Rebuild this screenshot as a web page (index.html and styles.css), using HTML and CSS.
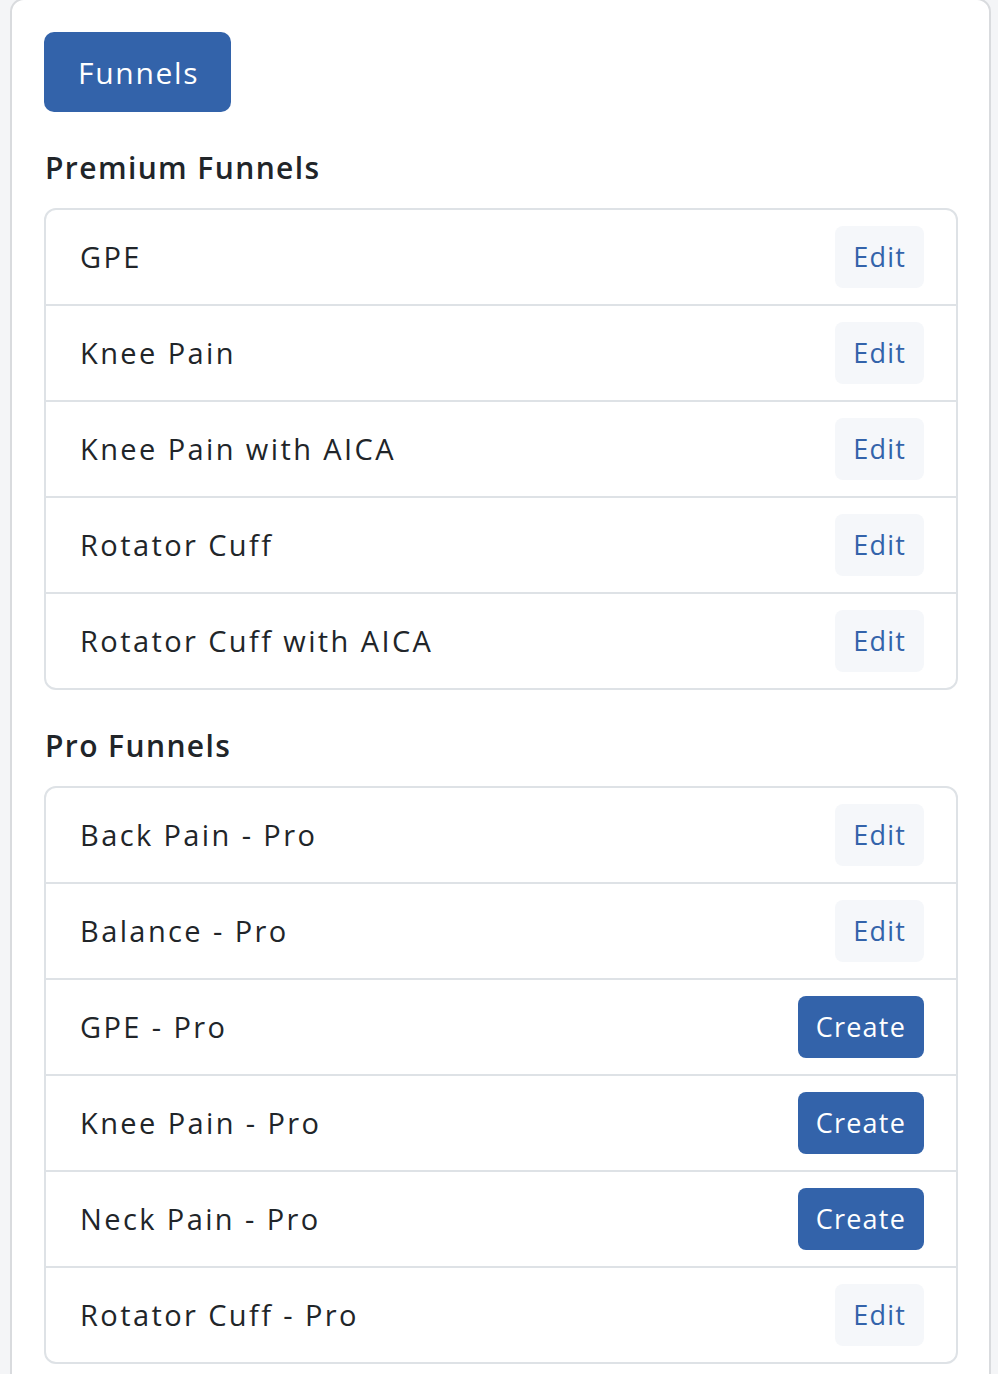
FILE: index.html
```html
<!DOCTYPE html>
<html lang="en">
<head>
<meta charset="utf-8">
<title>Funnels</title>
<link rel="stylesheet" href="styles.css">
</head>
<body>
<div class="card">
  <div class="top"><button class="btn btn-primary btn-lg">Funnels</button></div>
  <h2 class="section-title">Premium Funnels</h2>
  <ul class="list">
    <li class="row"><span class="name">GPE</span><button class="btn btn-light">Edit</button></li>
    <li class="row"><span class="name">Knee Pain</span><button class="btn btn-light">Edit</button></li>
    <li class="row"><span class="name">Knee Pain with AICA</span><button class="btn btn-light">Edit</button></li>
    <li class="row"><span class="name">Rotator Cuff</span><button class="btn btn-light">Edit</button></li>
    <li class="row"><span class="name">Rotator Cuff with AICA</span><button class="btn btn-light">Edit</button></li>
  </ul>
  <h2 class="section-title second">Pro Funnels</h2>
  <ul class="list">
    <li class="row"><span class="name">Back Pain - Pro</span><button class="btn btn-light">Edit</button></li>
    <li class="row"><span class="name">Balance - Pro</span><button class="btn btn-light">Edit</button></li>
    <li class="row"><span class="name">GPE - Pro</span><button class="btn btn-primary">Create</button></li>
    <li class="row"><span class="name">Knee Pain - Pro</span><button class="btn btn-primary">Create</button></li>
    <li class="row"><span class="name">Neck Pain - Pro</span><button class="btn btn-primary">Create</button></li>
    <li class="row"><span class="name">Rotator Cuff - Pro</span><button class="btn btn-light">Edit</button></li>
  </ul>
</div>
</body>
</html>
```
FILE: styles.css
```css
* { box-sizing: border-box; }
html, body { margin: 0; padding: 0; }
body {
  background: #f4f5f7;
  font-family: "Open Sans", "Noto Sans", sans-serif;
  color: #212529;
  height: 1374px;
  overflow: hidden;
}
.card {
  margin: -2px 7px 0 10px;
  background: #fff;
  border: 2px solid #d9dbde;
  border-radius: 14px;
  padding: 32px 31px 40px 32px;
}
.top { display: flex; }
.btn {
  font-family: inherit;
  border: 0;
  border-radius: 8px;
  font-size: 27px;
  height: 62px;
  padding: 0 18px;
  cursor: pointer;
  letter-spacing: 1.2px;
}
.btn-lg {
  height: 80px;
  padding: 0 32px 0 34px;
  font-size: 30px;
  border-radius: 10px;
  letter-spacing: 1.7px;
}
.btn-primary { background: #3363aa; color: #fff; }
.btn-light { background: #f5f7fa; color: #3363aa; }
.section-title {
  margin: 38px 0 22px 1px;
  font-size: 30px;
  font-weight: 600;
  line-height: 36px;
  letter-spacing: 1.4px;
}
.section-title.second { margin-top: 38px; }
.list {
  list-style: none;
  margin: 0;
  padding: 0;
  border: 2px solid #dee2e6;
  border-radius: 12px;
}
.row {
  display: flex;
  align-items: center;
  justify-content: space-between;
  height: 96px;
  padding: 0 32px 1px 34px;
  border-top: 2px solid #dee2e6;
}
.row:first-child { border-top: 0; height: 94px; }
.name {
  font-size: 29px;
  letter-spacing: 2.4px;
}
```
